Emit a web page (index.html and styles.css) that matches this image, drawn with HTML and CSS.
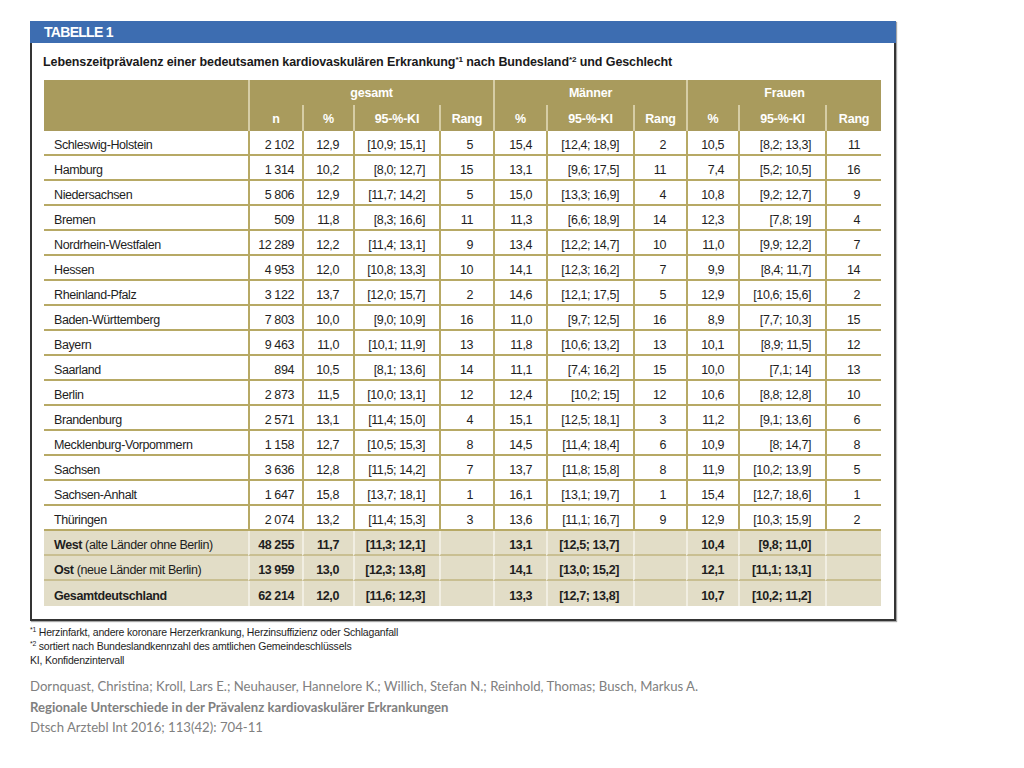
FILE: index.html
```html
<!DOCTYPE html>
<html lang="de">
<head>
<meta charset="utf-8">
<title>Tabelle 1</title>
<link rel="stylesheet" href="styles.css">
</head>
<body>
<div class="page">
  <div class="frame">
    <div class="bar">TABELLE 1</div>
    <h1 class="title">Lebenszeitprävalenz einer bedeutsamen kardiovaskulären Erkrankung<sup>*1</sup> nach Bundesland<sup>*2</sup> und Geschlecht</h1>
    <table class="data">
      <colgroup>
        <col class="c-label"><col class="c-n"><col class="c-p"><col class="c-ki"><col class="c-r">
        <col class="c-p2"><col class="c-ki2"><col class="c-r2"><col class="c-p3"><col class="c-ki3"><col class="c-r3">
      </colgroup>
      <thead>
        <tr class="h1">
          <th rowspan="2"></th>
          <th colspan="4" class="grp">gesamt</th>
          <th colspan="3" class="grp">Männer</th>
          <th colspan="3" class="grp">Frauen</th>
        </tr>
        <tr class="h2">
          <th class="sep">n</th><th class="sep">%</th><th class="sep">95-%-KI</th><th class="sep">Rang</th>
          <th class="sep">%</th><th class="sep">95-%-KI</th><th class="sep">Rang</th>
          <th class="sep">%</th><th class="sep">95-%-KI</th><th class="sep">Rang</th>
        </tr>
      </thead>
      <tbody>
        <tr><td>Schleswig-Holstein</td><td>2 102</td><td>12,9</td><td>[10,9; 15,1]</td><td>5</td><td>15,4</td><td>[12,4; 18,9]</td><td>2</td><td>10,5</td><td>[8,2; 13,3]</td><td>11</td></tr>
        <tr><td>Hamburg</td><td>1 314</td><td>10,2</td><td>[8,0; 12,7]</td><td>15</td><td>13,1</td><td>[9,6; 17,5]</td><td>11</td><td>7,4</td><td>[5,2; 10,5]</td><td>16</td></tr>
        <tr><td>Niedersachsen</td><td>5 806</td><td>12,9</td><td>[11,7; 14,2]</td><td>5</td><td>15,0</td><td>[13,3; 16,9]</td><td>4</td><td>10,8</td><td>[9,2; 12,7]</td><td>9</td></tr>
        <tr><td>Bremen</td><td>509</td><td>11,8</td><td>[8,3; 16,6]</td><td>11</td><td>11,3</td><td>[6,6; 18,9]</td><td>14</td><td>12,3</td><td>[7,8; 19]</td><td>4</td></tr>
        <tr><td>Nordrhein-Westfalen</td><td>12 289</td><td>12,2</td><td>[11,4; 13,1]</td><td>9</td><td>13,4</td><td>[12,2; 14,7]</td><td>10</td><td>11,0</td><td>[9,9; 12,2]</td><td>7</td></tr>
        <tr><td>Hessen</td><td>4 953</td><td>12,0</td><td>[10,8; 13,3]</td><td>10</td><td>14,1</td><td>[12,3; 16,2]</td><td>7</td><td>9,9</td><td>[8,4; 11,7]</td><td>14</td></tr>
        <tr><td>Rheinland-Pfalz</td><td>3 122</td><td>13,7</td><td>[12,0; 15,7]</td><td>2</td><td>14,6</td><td>[12,1; 17,5]</td><td>5</td><td>12,9</td><td>[10,6; 15,6]</td><td>2</td></tr>
        <tr><td>Baden-Württemberg</td><td>7 803</td><td>10,0</td><td>[9,0; 10,9]</td><td>16</td><td>11,0</td><td>[9,7; 12,5]</td><td>16</td><td>8,9</td><td>[7,7; 10,3]</td><td>15</td></tr>
        <tr><td>Bayern</td><td>9 463</td><td>11,0</td><td>[10,1; 11,9]</td><td>13</td><td>11,8</td><td>[10,6; 13,2]</td><td>13</td><td>10,1</td><td>[8,9; 11,5]</td><td>12</td></tr>
        <tr><td>Saarland</td><td>894</td><td>10,5</td><td>[8,1; 13,6]</td><td>14</td><td>11,1</td><td>[7,4; 16,2]</td><td>15</td><td>10,0</td><td>[7,1; 14]</td><td>13</td></tr>
        <tr><td>Berlin</td><td>2 873</td><td>11,5</td><td>[10,0; 13,1]</td><td>12</td><td>12,4</td><td>[10,2; 15]</td><td>12</td><td>10,6</td><td>[8,8; 12,8]</td><td>10</td></tr>
        <tr><td>Brandenburg</td><td>2 571</td><td>13,1</td><td>[11,4; 15,0]</td><td>4</td><td>15,1</td><td>[12,5; 18,1]</td><td>3</td><td>11,2</td><td>[9,1; 13,6]</td><td>6</td></tr>
        <tr><td>Mecklenburg-Vorpommern</td><td>1 158</td><td>12,7</td><td>[10,5; 15,3]</td><td>8</td><td>14,5</td><td>[11,4; 18,4]</td><td>6</td><td>10,9</td><td>[8; 14,7]</td><td>8</td></tr>
        <tr><td>Sachsen</td><td>3 636</td><td>12,8</td><td>[11,5; 14,2]</td><td>7</td><td>13,7</td><td>[11,8; 15,8]</td><td>8</td><td>11,9</td><td>[10,2; 13,9]</td><td>5</td></tr>
        <tr><td>Sachsen-Anhalt</td><td>1 647</td><td>15,8</td><td>[13,7; 18,1]</td><td>1</td><td>16,1</td><td>[13,1; 19,7]</td><td>1</td><td>15,4</td><td>[12,7; 18,6]</td><td>1</td></tr>
        <tr><td>Thüringen</td><td>2 074</td><td>13,2</td><td>[11,4; 15,3]</td><td>3</td><td>13,6</td><td>[11,1; 16,7]</td><td>9</td><td>12,9</td><td>[10,3; 15,9]</td><td>2</td></tr>
      </tbody>
      <tbody class="sum">
        <tr><td><b>West</b> (alte Länder ohne Berlin)</td><td>48 255</td><td>11,7</td><td>[11,3; 12,1]</td><td></td><td>13,1</td><td>[12,5; 13,7]</td><td></td><td>10,4</td><td>[9,8; 11,0]</td><td></td></tr>
        <tr><td><b>Ost</b> (neue Länder mit Berlin)</td><td>13 959</td><td>13,0</td><td>[12,3; 13,8]</td><td></td><td>14,1</td><td>[13,0; 15,2]</td><td></td><td>12,1</td><td>[11,1; 13,1]</td><td></td></tr>
        <tr><td><b>Gesamtdeutschland</b></td><td>62 214</td><td>12,0</td><td>[11,6; 12,3]</td><td></td><td>13,3</td><td>[12,7; 13,8]</td><td></td><td>10,7</td><td>[10,2; 11,2]</td><td></td></tr>
      </tbody>
    </table>
  </div>
  <div class="notes">
    <p><sup>*1</sup> Herzinfarkt, andere koronare Herzerkrankung, Herzinsuffizienz oder Schlaganfall</p>
    <p><sup>*2</sup> sortiert nach Bundeslandkennzahl des amtlichen Gemeindeschlüssels</p>
    <p>KI, Konfidenzintervall</p>
  </div>
  <div class="cite">
    <p>Dornquast, Christina; Kroll, Lars E.; Neuhauser, Hannelore K.; Willich, Stefan N.; Reinhold, Thomas; Busch, Markus A.</p>
    <p class="cite-title">Regionale Unterschiede in der Prävalenz kardiovaskulärer Erkrankungen</p>
    <p>Dtsch Arztebl Int 2016; 113(42): 704-11</p>
  </div>
</div>
</body>
</html>
```
FILE: styles.css
```css
* { box-sizing: border-box; }
html, body { margin: 0; padding: 0; background: #ffffff; }
body { font-family: "Liberation Sans", Arial, sans-serif; color: #1e1e1e; }

.page { padding: 21px 0 0 30px; }

.frame {
  width: 866px;
  height: 600px;
  border: 2px solid #343434;
  border-top: none;
  box-shadow: 1px 1px 1px rgba(0,0,0,0.35);
}

.bar {
  height: 22px;
  margin: 0 -2px;
  background: #3d6db1;
  color: #ffffff;
  font-weight: bold;
  font-size: 14px;
  line-height: 23px;
  padding-left: 14px;
  letter-spacing: -0.7px;
}

.title {
  margin: 9px 0 8px 11px;
  font-size: 12.5px;
  line-height: 20px;
  font-weight: bold;
  letter-spacing: -0.1px;
  color: #1a1a1a;
}
.title sup, .notes sup { font-size: 0.65em; line-height: 0; vertical-align: 0.55em; }

.data {
  margin-left: 12px;
  width: 837px;
  table-layout: fixed;
  border-collapse: separate;
  border-spacing: 0;
  font-size: 12.5px;
  letter-spacing: -0.4px;
}
.c-label { width: 204px; }
.c-n { width: 54px; }
.c-p { width: 51px; }
.c-ki { width: 86px; }
.c-r { width: 54px; }
.c-p2 { width: 53px; }
.c-ki2 { width: 87px; }
.c-r2 { width: 53px; }
.c-p3 { width: 52px; }
.c-ki3 { width: 87px; }
.c-r3 { width: 56px; }

.data th {
  background: #a99b5d;
  color: #ffffff;
  font-weight: bold;
  font-size: 12.5px;
  letter-spacing: -0.2px;
  text-align: center;
  padding: 0;
  white-space: nowrap;
}
.data .h1 th { height: 25px; }
.data .h2 th { height: 26px; padding-top: 1px; }
.data th.grp, .data th.sep { border-left: 2px solid #d6cda5; }

.data td {
  height: 25px;
  padding: 4px 14px 0 0;
  border-bottom: 2px solid #b7a965;
  text-align: right;
  white-space: nowrap;
  vertical-align: middle;
}
.data td + td { border-left: 2px solid #b7a965; }
.data td:first-child { text-align: left; padding: 4px 0 0 10px; }
.data td:nth-child(2) { padding-right: 8px; }
.data td:nth-child(5), .data td:nth-child(8) { padding-right: 20px; }
.data td:nth-child(11) { padding-right: 21px; }

.sum td { background: #e2ddc7; font-weight: bold; border-bottom: 2px solid #c9bf92; }
.sum td:first-child { font-weight: normal; }
.sum td:first-child b { font-weight: bold; }
.sum td + td { border-left: 2px solid #f1eee2; }
.sum tr:last-child td { border-bottom: none; height: 25px; }

.notes { margin-top: 4px; font-size: 10.5px; line-height: 14px; letter-spacing: -0.2px; color: #1e1e1e; }
.notes p { margin: 0; }

.cite {
  margin-top: 9px;
  font-family: Lato, "Open Sans", sans-serif;
  font-size: 13.15px;
  line-height: 20.5px;
  color: #808080;
}
.cite p { margin: 0; }
.cite-title { font-weight: bold; }
```
